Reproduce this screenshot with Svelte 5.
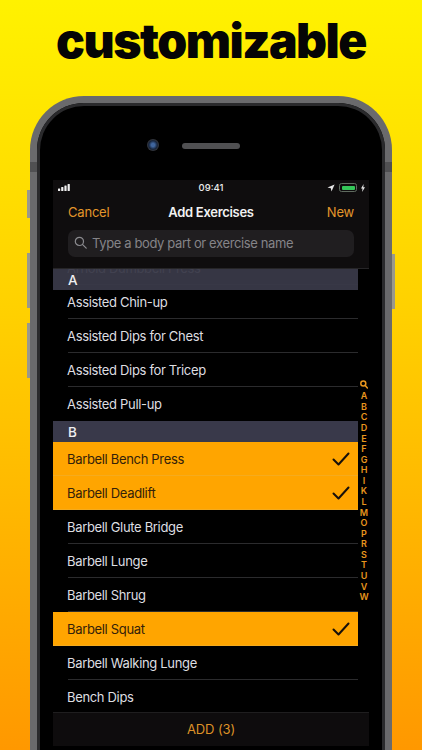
<script lang="ts">
  const sections = [
    {
      letter: "A",
      rows: [
        { name: "Assisted Chin-up" },
        { name: "Assisted Dips for Chest" },
        { name: "Assisted Dips for Tricep" },
        { name: "Assisted Pull-up" },
      ],
    },
    {
      letter: "B",
      rows: [
        { name: "Barbell Bench Press", on: true },
        { name: "Barbell Deadlift", on: true },
        { name: "Barbell Glute Bridge" },
        { name: "Barbell Lunge" },
        { name: "Barbell Shrug" },
        { name: "Barbell Squat", on: true },
        { name: "Barbell Walking Lunge" },
        { name: "Bench Dips" },
      ],
    },
  ];

  const letters = "ABCDEFGHIKLMOPRSTUVW".split("");
</script>

<div class="page">
  <h1>customizable</h1>

  <div class="phone">
    <i class="btn mute"></i>
    <i class="btn vol-up"></i>
    <i class="btn vol-down"></i>
    <i class="btn power"></i>
    <i class="band left"></i>
    <i class="band right"></i>

    <div class="bezel">
      <div class="sensors">
        <span class="camera"></span>
        <span class="speaker"></span>
      </div>

      <div class="screen">
        <header class="nav">
          <div class="status">
            <svg class="signal" width="13" height="7" viewBox="0 0 13 7">
              <rect x="0" y="4.5" width="2.2" height="2.5" rx=".5" />
              <rect x="3.2" y="3" width="2.2" height="4" rx=".5" />
              <rect x="6.4" y="1.5" width="2.2" height="5.5" rx=".5" />
              <rect x="9.6" y="0" width="2.2" height="7" rx=".5" />
            </svg>
            <span class="time">09:41</span>
            <div class="status-right">
              <svg width="8" height="8" viewBox="0 0 8 8">
                <path d="M7.6.4.5 3.6l3.3.7.7 3.3z" fill="#e6e6e6" />
              </svg>
              <span class="battery"><span></span></span>
              <svg width="4" height="8" viewBox="0 0 4 8">
                <path d="M2.6 0 0 4.6h1.5L1.1 8 4 3.3H2.3z" fill="#e6e6e6" />
              </svg>
            </div>
          </div>

          <div class="titlebar">
            <span class="action">Cancel</span>
            <span class="title">Add Exercises</span>
            <span class="action new">New</span>
          </div>

          <div class="search">
            <svg width="13" height="13" viewBox="0 0 13 13" fill="none" stroke="#8b8b8f" stroke-width="1.2">
              <circle cx="5.4" cy="5.4" r="4.1" />
              <path d="m8.4 8.4 3.8 3.8" stroke-linecap="round" />
            </svg>
            <span>Type a body part or exercise name</span>
          </div>
        </header>

        <div class="content">
          <div class="list">
            <div class="row ghost"><span>Arnold Dumbbell Press</span></div>
            {#each sections as section, s}
              <div class="section" class:first={s === 0}>{section.letter}</div>
              {#each section.rows as row, i}
                <div class="row" class:on={row.on} class:last={i === section.rows.length - 1}>
                  <span>{row.name}</span>
                  {#if row.on}
                    <svg class="check" width="18" height="14" viewBox="0 0 18 14" fill="none" stroke="#17100a" stroke-width="2" stroke-linecap="round" stroke-linejoin="round">
                      <path d="M1.5 7.5 6.5 12.5 16.5 1.5" />
                    </svg>
                  {/if}
                </div>
              {/each}
            {/each}
          </div>

          <div class="index">
            <svg width="8" height="9" viewBox="0 0 8 9" fill="none" stroke="#e8961e" stroke-width="1.5">
              <circle cx="3.3" cy="3.5" r="2.5" />
              <path d="m5.2 5.4 2.2 2.6" stroke-linecap="round" />
            </svg>
            {#each letters as letter}
              <span>{letter}</span>
            {/each}
          </div>
        </div>

        <footer class="add">ADD (3)</footer>
      </div>
    </div>
  </div>
</div>

<style>
  :global(body) {
    margin: 0;
  }

  .page {
    height: 750px;
    overflow: hidden;
    background: linear-gradient(#fff200, #ffd000 42%, #ff9800);
    font-family: Inter, "Liberation Sans", sans-serif;
  }

  h1 {
    margin: 0;
    height: 96px;
    box-sizing: border-box;
    padding-top: 13px;
    text-align: center;
    font-size: 48px;
    line-height: 56px;
    font-weight: 900;
    letter-spacing: -1.5px;
    color: #050505;
  }

  .phone {
    position: relative;
    width: 362px;
    height: 700px;
    margin-left: 30px;
    box-sizing: border-box;
    border: solid #6a6a6c;
    border-width: 7px 7px 0;
    border-radius: 54px 54px 0 0;
    background: #000;
  }

  .btn {
    position: absolute;
    width: 3px;
    background: #9a988c;
  }

  .mute {
    left: -10px;
    top: 87px;
    height: 28px;
  }

  .vol-up {
    left: -10px;
    top: 150px;
    height: 55px;
  }

  .vol-down {
    left: -10px;
    top: 220px;
    height: 55px;
  }

  .power {
    right: -10px;
    top: 151px;
    height: 55px;
  }

  .band {
    position: absolute;
    top: 59px;
    width: 7px;
    height: 10px;
    background: #505052;
  }

  .band.left {
    left: -7px;
  }

  .band.right {
    right: -7px;
  }

  .bezel {
    height: 100%;
    box-sizing: border-box;
    border: solid #2a2a2c;
    border-width: 3px 3px 0;
    border-radius: 47px 47px 0 0;
    padding: 0 13px;
    background: #000;
  }

  .sensors {
    position: relative;
    height: 74px;
  }

  .camera {
    position: absolute;
    left: 94px;
    top: 33px;
    width: 12px;
    height: 12px;
    border-radius: 50%;
    background: radial-gradient(#3f659e 20%, #16243c 50%, #3a3a3d 72%);
  }

  .speaker {
    position: absolute;
    left: 129px;
    top: 37px;
    width: 58px;
    height: 6px;
    border-radius: 3px;
    background: #505052;
  }

  .screen {
    display: flex;
    flex-direction: column;
    height: 566px;
    color: #e4e4e6;
    background: #000;
  }

  .nav {
    height: 89px;
    flex: none;
    box-sizing: border-box;
    background: #0f0d0e;
    border-bottom: 1px solid #262527;
  }

  .status {
    display: flex;
    align-items: center;
    justify-content: space-between;
    height: 15px;
    padding: 0 4px 0 5px;
    position: relative;
  }

  .signal {
    fill: #f0f0f0;
  }

  .time {
    position: absolute;
    left: 0;
    right: 0;
    text-align: center;
    font-size: 9.5px;
    font-weight: 500;
    color: #ececec;
  }

  .status-right {
    display: flex;
    align-items: center;
    gap: 4px;
  }

  .battery {
    display: block;
    box-sizing: border-box;
    width: 18px;
    height: 9px;
    padding: 1.5px;
    border: 1px solid #5f6b5f;
    border-radius: 2.5px;
  }

  .battery span {
    display: block;
    height: 100%;
    border-radius: 1px;
    background: #34c759;
  }

  .titlebar {
    display: grid;
    grid-template-columns: 1fr auto 1fr;
    align-items: center;
    height: 34px;
    padding: 0 15px;
  }

  .action {
    font-size: 13px;
    letter-spacing: -0.2px;
    color: #e3962a;
  }

  .action.new {
    text-align: right;
  }

  .title {
    font-size: 13px;
    font-weight: 600;
    letter-spacing: -0.3px;
    color: #f2f2f2;
  }

  .search {
    display: flex;
    align-items: center;
    gap: 5px;
    height: 27px;
    box-sizing: border-box;
    margin: 1px 15px 0;
    padding: 0 6px 2px;
    border-radius: 7px;
    background: #201e20;
    color: #858488;
    font-size: 13px;
    letter-spacing: -0.37px;
  }

  .content {
    display: flex;
    flex: 1;
    min-height: 0;
  }

  .list {
    flex: 1;
    min-width: 0;
    overflow: hidden;
  }

  .row {
    position: relative;
    display: flex;
    align-items: center;
    justify-content: space-between;
    height: 34px;
    box-sizing: border-box;
    padding: 0 8px 0 14px;
    font-size: 13px;
    letter-spacing: -0.33px;
    color: #dedee0;
  }

  .row::after {
    content: "";
    position: absolute;
    left: 15px;
    right: 0;
    bottom: 0;
    height: 1px;
    background: #2b2b2d;
  }

  .row.last::after {
    display: none;
  }

  .row.ghost {
    margin-top: -18px;
    color: #bdbdc0;
  }

  .row.on {
    background: #ffa500;
    color: #33210a;
  }

  .row.on::after {
    background: #f5ab1e;
    left: 0;
  }

  .section {
    position: relative;
    height: 21px;
    padding-left: 15px;
    background: #39394a;
    font-size: 13.5px;
    font-weight: 500;
    line-height: 22px;
    color: #efeff1;
  }

  .section.first {
    margin: -16px 0 -5px;
    background: rgba(57, 57, 72, 0.94);
  }

  .index {
    display: flex;
    flex: none;
    flex-direction: column;
    align-items: center;
    justify-content: center;
    box-sizing: border-box;
    width: 11px;
    padding: 2px 0 0 1px;
    font-size: 9px;
    font-weight: 600;
    line-height: 10.58px;
    color: #e8961e;
  }

  .index svg {
    margin-bottom: 2px;
  }

  .add {
    height: 34px;
    flex: none;
    box-sizing: border-box;
    border-top: 1px solid #1f1e1f;
    background: #0e0c0d;
    text-align: center;
    font-size: 13px;
    letter-spacing: -0.1px;
    line-height: 33px;
    color: #dd9227;
  }
</style>
